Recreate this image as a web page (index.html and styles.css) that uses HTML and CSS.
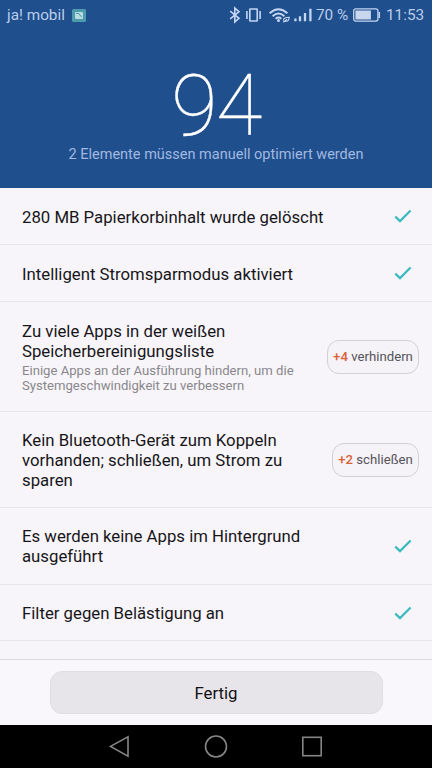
FILE: index.html
```
<!DOCTYPE html>
<html lang="de">
<head>
<meta charset="utf-8">
<title>Optimierung</title>
<link rel="stylesheet" href="styles.css">
</head>
<body>
<svg class="defs" width="0" height="0">
  <symbol id="check" viewBox="0 0 18 14"><path d="M1.3 7.6 6 12.1 16.6 1.4"/></symbol>
</svg>
<div class="screen">
  <header class="header">
    <div class="status">
      <span class="carrier">ja! mobil</span>
      <svg class="thumb" width="14" height="13" viewBox="0 0 14 13"><rect width="14" height="13" rx="1.5" fill="#4e9cab"/><rect x="3" y="3" width="8" height="7" rx="1" fill="#b6dce4"/><path d="M4 4.5h3l1 2 2 1" stroke="#4e9cab" fill="none"/></svg>
      <svg class="icons" width="84" height="18" viewBox="0 0 84 18" fill="none" stroke="#c4d5f2" stroke-width="1.6">
        <path d="M1.2 5.1 10 12.3 5.8 15.9V2.1L10 5.7 1.2 12.9"/>
        <rect x="20.8" y="3" width="7.4" height="12" rx=".5"/>
        <path d="M17.9 5v8M31.1 5v8"/>
        <path d="M40.6 7.3Q49.5-.6 58.4 7.3M43.6 10.2Q49.5 5 55.4 10.2M46.6 12.7Q49.5 10.3 52.4 12.7" stroke-width="1.9"/>
        <circle cx="49.5" cy="14.5" r="1.5" fill="#c4d5f2" stroke="none"/>
        <path d="M54.4 14.5c0-2.5 2.6-3.2 5.8-3.2 0 3.3-2 4.4-5 4M54.2 16.2l3.8-2.9" stroke-width="1.1"/>
        <path d="M66.4 12.4v2.8M71 10.2v5M76 7v8.2M81.4 2.8v12.4" stroke-width="2.3"/>
      </svg>
      <span class="percent">70 %</span>
      <svg class="battery" width="28" height="14" viewBox="0 0 28 14"><rect x=".7" y=".8" width="24.2" height="12.3" rx="2" fill="none" stroke="#c4d5f2" stroke-width="1.3"/><rect x="2.4" y="2.5" width="15.5" height="9" fill="#c8d6ee"/><path d="M26.3 4v6" stroke="#c4d5f2" stroke-width="1.5"/></svg>
      <span class="clock">11:53</span>
    </div>
    <div class="score">94</div>
    <div class="summary">2 Elemente müssen manuell optimiert werden</div>
  </header>
  <main class="list">
    <div class="row single"><div class="text"><div class="title">280 MB Papierkorbinhalt wurde gelöscht</div></div><svg class="check"><use href="#check"/></svg></div>
    <div class="row single"><div class="text"><div class="title">Intelligent Stromsparmodus aktiviert</div></div><svg class="check"><use href="#check"/></svg></div>
    <div class="row apps"><div class="text"><div class="title">Zu viele Apps in der weißen<br>Speicherbereinigungsliste</div><div class="detail">Einige Apps an der Ausführung hindern, um die<br>Systemgeschwindigkeit zu verbessern</div></div><button class="pill prevent"><b>+4</b> verhindern</button></div>
    <div class="row bluetooth"><div class="text"><div class="title">Kein Bluetooth-Gerät zum Koppeln<br>vorhanden; schließen, um Strom zu<br>sparen</div></div><button class="pill close"><b>+2</b> schließen</button></div>
    <div class="row background"><div class="text"><div class="title">Es werden keine Apps im Hintergrund<br>ausgeführt</div></div><svg class="check"><use href="#check"/></svg></div>
    <div class="row last"><div class="text"><div class="title">Filter gegen Belästigung an</div></div><svg class="check"><use href="#check"/></svg></div>
  </main>
  <footer class="footer"><button class="done">Fertig</button></footer>
  <nav class="nav">
    <svg width="22" height="24" viewBox="0 0 22 24"><path d="M1.5 11.4 19 1.8V21.2Z"/></svg>
    <svg width="24" height="24" viewBox="0 0 24 24"><circle cx="12" cy="11.5" r="10.5"/></svg>
    <svg width="22" height="24" viewBox="0 0 22 24"><rect x="1.8" y="2.3" width="18.4" height="18.4"/></svg>
  </nav>
</div>
</body>
</html>
```
FILE: styles.css
```
* { box-sizing: border-box; }
body { margin: 0; font-family: Roboto, "Liberation Sans", sans-serif; background: #f7f5f9; }
.defs { display: block; }
.screen { width: 432px; height: 768px; display: flex; flex-direction: column; overflow: hidden; }
.header { height: 188px; flex: none; background: #204f8d; color: #fff; text-align: center; }
.status { height: 30px; display: flex; align-items: center; padding: 0 7px; color: #bacdec; font-size: 15.3px; line-height: 30px; white-space: nowrap; }
.carrier { width: 65px; text-align: left; }
.thumb, .icons, .battery { flex: none; }
.icons { margin-left: auto; }
.percent { width: 33px; margin-left: 3px; text-align: left; }
.battery { margin-left: 4px; }
.clock { width: 39px; margin-left: 5px; text-align: left; }
.score { height: 80px; margin-top: 37px; font-size: 84.5px; line-height: 80px; font-weight: 100; letter-spacing: -1.5px; -webkit-text-stroke: .4px #fff; }
.summary { font-size: 14.5px; line-height: 16px; color: #a1b9e0; white-space: nowrap; }
.list { flex: 1; background: #f7f5f9; }
.row { display: flex; align-items: center; justify-content: space-between; padding: 0 20px 0 22px; border-bottom: 1px solid #e7e5e9; }
.single { height: 57px; }
.single .title { padding-top: 2px; }
.last { height: 56px; }
.apps { height: 110px; padding-right: 13px; }
.apps .text { padding-top: 1px; }
.bluetooth { height: 96px; padding-right: 13px; }
.background { height: 77px; }
.text { white-space: nowrap; }
.title { font-size: 16.75px; line-height: 20px; color: #17151a; }
.detail { margin-top: 2px; font-size: 13.12px; line-height: 15.5px; color: #89878c; }
.check { width: 18px; height: 14px; flex: none; fill: none; stroke: #3cbabd; stroke-width: 2.2; }
.pill { flex: none; height: 34px; padding: 0; border: 1px solid #d2cfd6; border-radius: 12px; background: #f5f3f7; color: #55535a; font: 13.2px Roboto, sans-serif; white-space: nowrap; }
.pill b { color: #dc6038; font-weight: 500; }
.prevent { width: 92px; }
.close { width: 87px; }
.footer { height: 66px; flex: none; display: flex; justify-content: center; padding-top: 11px; border-top: 1px solid #dddbdf; background: #f9f7fb; }
.done { width: 333px; height: 43px; padding: 0; border: 1px solid #e0dee2; border-radius: 12px; background: #e7e5e9; color: #111; font: 16.8px Roboto, sans-serif; }
.nav { height: 43px; flex: none; display: flex; align-items: center; justify-content: center; gap: 73px; background: #000; }
.nav svg { fill: none; stroke: #858585; stroke-width: 1.6; }
```
